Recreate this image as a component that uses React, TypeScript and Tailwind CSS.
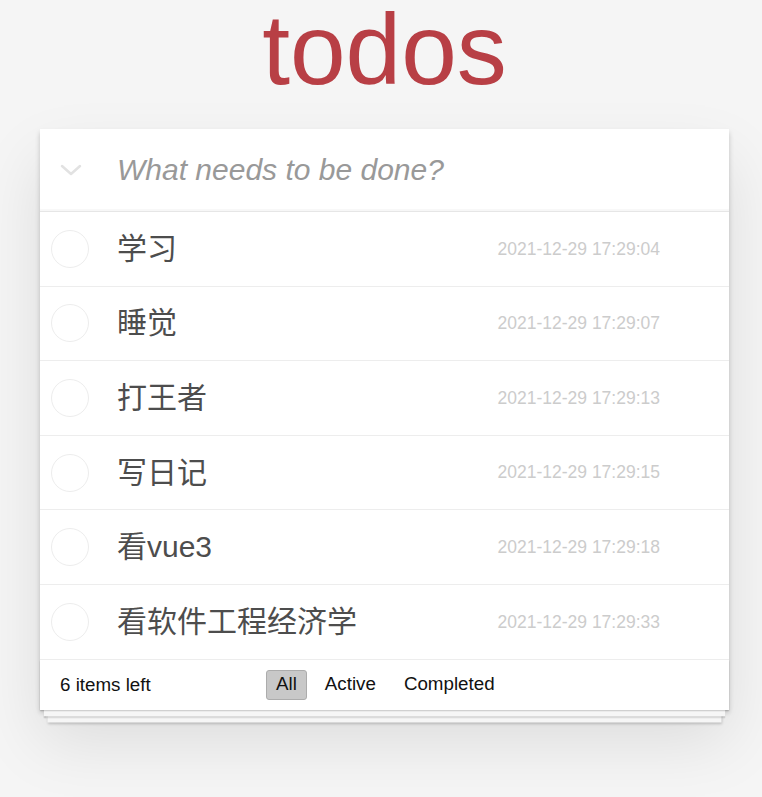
import React, { useState } from 'react';

type Todo = {
  id: number;
  title: string;
  time: string;
  done: boolean;
};

const initialTodos: Todo[] = [
  { id: 1, title: '学习', time: '2021-12-29 17:29:04', done: false },
  { id: 2, title: '睡觉', time: '2021-12-29 17:29:07', done: false },
  { id: 3, title: '打王者', time: '2021-12-29 17:29:13', done: false },
  { id: 4, title: '写日记', time: '2021-12-29 17:29:15', done: false },
  { id: 5, title: '看vue3', time: '2021-12-29 17:29:18', done: false },
  { id: 6, title: '看软件工程经济学', time: '2021-12-29 17:29:33', done: false },
];

const filters = ['All', 'Active', 'Completed'] as const;

export default function App() {
  const [todos] = useState<Todo[]>(initialTodos);
  const [filter, setFilter] = useState<(typeof filters)[number]>('All');
  const left = todos.filter(t => !t.done).length;

  return (
    <div className="min-h-[797px] bg-[#f5f5f5] text-[#111] font-['Liberation_Sans','Noto_Sans_CJK_SC',sans-serif] overflow-hidden">
      <div className="w-[689px] ml-[40px]">
        {/* Title */}
        <h1 className="-mt-[8px] h-[115px] text-center text-[100px] leading-[115px] font-normal text-[#b83f45]">todos</h1>

        {/* Card */}
        <section className="mt-[22px] bg-white shadow-[0_2.5px_5px_rgba(0,0,0,0.2),0_31px_62px_rgba(0,0,0,0.1)]">
          {/* New todo input */}
          <header className="flex items-center h-[83px] border-b border-[#e6e6e6] shadow-[inset_0_-2px_1px_rgba(0,0,0,0.03)]">
            <div className="w-[77px] pl-[20px] shrink-0">
              <svg width="22" height="12" viewBox="0 0 22 12" fill="none">
                <polyline points="2,2 11,10 20,2" stroke="#e2e2e2" strokeWidth="2.5" strokeLinecap="round" strokeLinejoin="round" />
              </svg>
            </div>
            <input
              className="flex-1 h-full bg-transparent outline-none text-[30px] text-[#4d4d4d] placeholder:italic placeholder:text-[#999]"
              placeholder="What needs to be done?"
            />
          </header>

          {/* List */}
          <ul>
            {todos.map(todo => (
              <li key={todo.id} className="flex items-center h-[74.6px] border-b border-[#ededed]">
                <div className="w-[77px] pl-[11px] shrink-0">
                  <span className="block w-[38px] h-[38px] rounded-full border border-[#ededed]" />
                </div>
                <span className="flex-1 text-[30px] text-[#4d4d4d] leading-[1.2]">{todo.title}</span>
                <span className="mr-[69px] text-[17.5px] text-[#cccccc]">{todo.time}</span>
              </li>
            ))}
          </ul>

          {/* Footer */}
          <footer className="flex items-center h-[50px] px-[20px] text-[18.75px] shadow-[0_1.25px_1.25px_rgba(0,0,0,0.2),0_10px_0_-3.75px_#f6f6f6,0_11.25px_1.25px_-3.75px_rgba(0,0,0,0.2),0_20px_0_-7.5px_#f6f6f6,0_21.25px_2.5px_-7.5px_rgba(0,0,0,0.2)]">
            <span className="w-[206px] shrink-0">{left} items left</span>
            <ul className="flex items-center gap-[8px]">
              {filters.map(f => (
                <li key={f}>
                  <button
                    type="button"
                    onClick={() => setFilter(f)}
                    className={`h-[30px] px-[9px] rounded-[3px] border leading-none cursor-pointer ${
                      filter === f ? 'bg-[#c8c8c8] border-[#acacac]' : 'bg-transparent border-transparent'
                    }`}
                  >
                    {f}
                  </button>
                </li>
              ))}
            </ul>
          </footer>
        </section>
      </div>
    </div>
  );
}
